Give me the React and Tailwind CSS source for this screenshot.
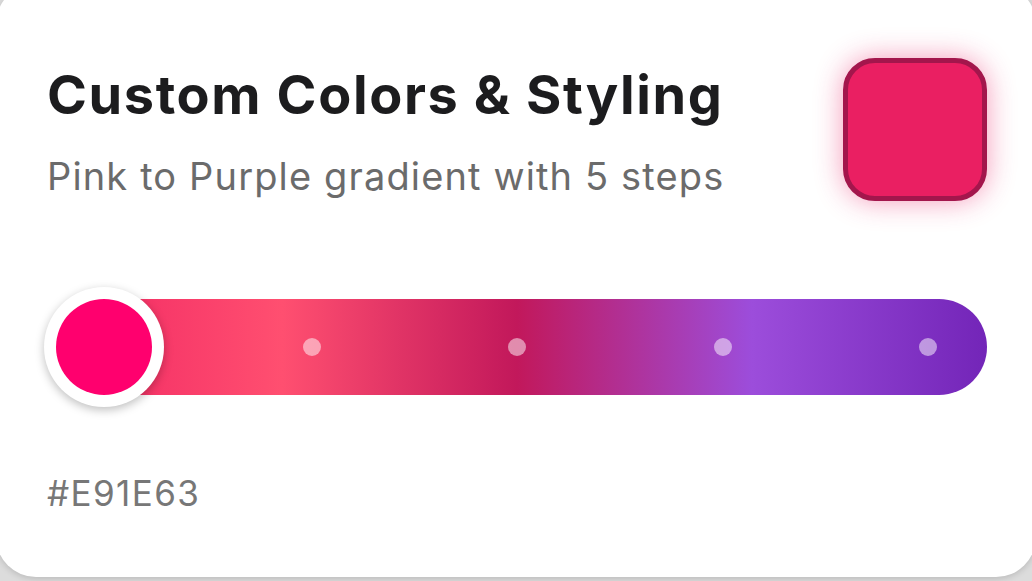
import React from "react";

const steps = [0, 1, 2, 3, 4];

export default function App() {
  return (
    <div className="h-[581px] w-[1032px] overflow-hidden bg-[#dcdcdc]" style={{ fontFamily: "Inter, 'Noto Sans', sans-serif" }}>
      <div className="-mt-[16px] -ml-[4px] h-[593px] w-[1040px] rounded-[40px] bg-white shadow-[0_2px_6px_rgba(0,0,0,0.15)] pl-[51px] pr-[49px] pt-[81px]">
        <div className="flex items-start justify-between">
          <div className="flex flex-col">
            <h1 className="text-[54px] font-bold leading-[60px] tracking-[0.03em] text-[#1c1c1e]">Custom Colors &amp; Styling</h1>
            <p className="mt-[29px] text-[38px] leading-[44px] tracking-[0.03em] text-[#6b6b6b]">Pink to Purple gradient with 5 steps</p>
          </div>
          <div className="-mt-[7px] h-[143px] w-[144px] rounded-[32px] border-[5px] border-[#a3164c] bg-[#ea1f62] shadow-[0_0_28px_rgba(233,30,99,0.45)]" />
        </div>

        <div className="relative mt-[98px] h-[96px] w-[940px] rounded-full bg-[linear-gradient(90deg,#f02462_0%,#ff4f70_25%,#c2185b_50%,#9c4ddb_75%,#7325b8_100%)]">
          <div className="flex h-full items-center justify-between px-[50px]">
            {steps.map((i) => (
              <div key={i} className="flex w-[18px] justify-center">
                {i === 0 ? null : <div className="h-[18px] w-[18px] rounded-full bg-white/50" />}
              </div>
            ))}
          </div>
          <div className="absolute left-[-3px] top-[-12px] flex h-[120px] w-[120px] items-center justify-center rounded-full bg-white shadow-[0_3px_10px_rgba(0,0,0,0.25)]">
            <div className="h-[96px] w-[96px] rounded-full bg-[#ff006e]" />
          </div>
        </div>

        <div className="mt-[78px] text-[35px] leading-[40px] tracking-[0.04em] text-[#777777]">#E91E63</div>
      </div>
    </div>
  );
}
